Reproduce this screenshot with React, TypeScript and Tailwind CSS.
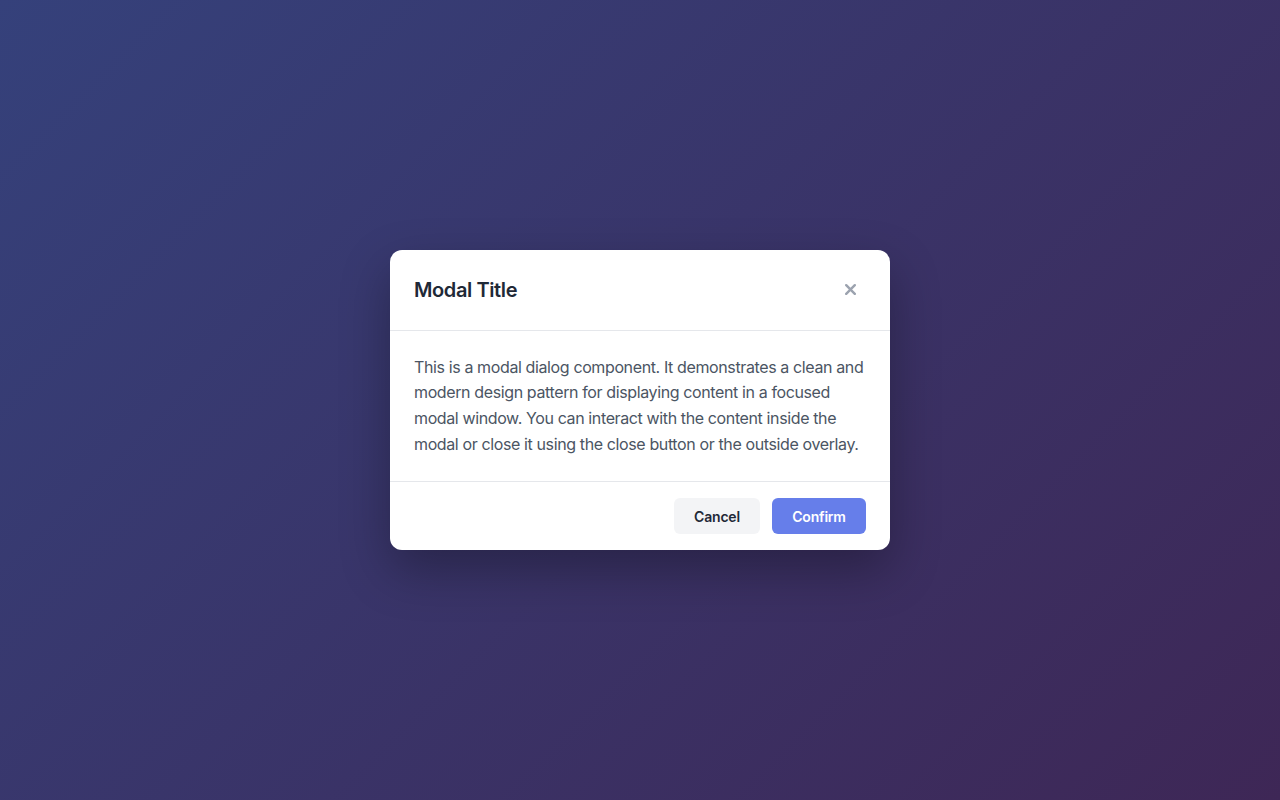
import React from "react";

export default function App() {
  return (
    <div
      className="relative w-full h-[800px] overflow-hidden bg-[linear-gradient(135deg,#35417b_0%,#3e2756_100%)] flex items-center justify-center"
      style={{ fontFamily: "Inter, 'Noto Sans', sans-serif" }}
    >
      <div className="w-[500px] bg-white rounded-xl shadow-[0_20px_50px_rgba(0,0,0,0.3)] overflow-hidden">
        <div className="flex items-center justify-between px-6 py-6 border-b border-[#e5e7eb]">
          <h2 className="text-[20px] leading-8 font-semibold tracking-[-0.4px] text-[#1f2937]">Modal Title</h2>
          <button className="w-8 h-8 flex items-center justify-center rounded-md text-[#9ca3af]">
            <svg width="11" height="11" viewBox="0 0 11 11" fill="none">
              <path d="M1.2 1.2L9.8 9.8M9.8 1.2L1.2 9.8" stroke="currentColor" strokeWidth="2.4" strokeLinecap="round" />
            </svg>
          </button>
        </div>
        <div className="px-6 py-6 border-b border-[#e5e7eb]">
          <p className="text-[16px] leading-[1.6] tracking-[-0.38px] text-[#4b5563]">
            This is a modal dialog component. It demonstrates a clean and modern design pattern for displaying content in a focused modal window. You can interact with the content inside the modal or close it using the close button or the outside overlay.
          </p>
        </div>
        <div className="flex justify-end gap-3 px-6 py-4">
          <button className="h-9 w-[86px] rounded-md bg-[#f3f4f6] text-[#1f2937] text-[14px] font-semibold tracking-[-0.2px]">Cancel</button>
          <button className="h-9 w-[94px] rounded-md bg-[#667eea] text-white text-[14px] font-semibold tracking-[-0.2px]">Confirm</button>
        </div>
      </div>
    </div>
  );
}
